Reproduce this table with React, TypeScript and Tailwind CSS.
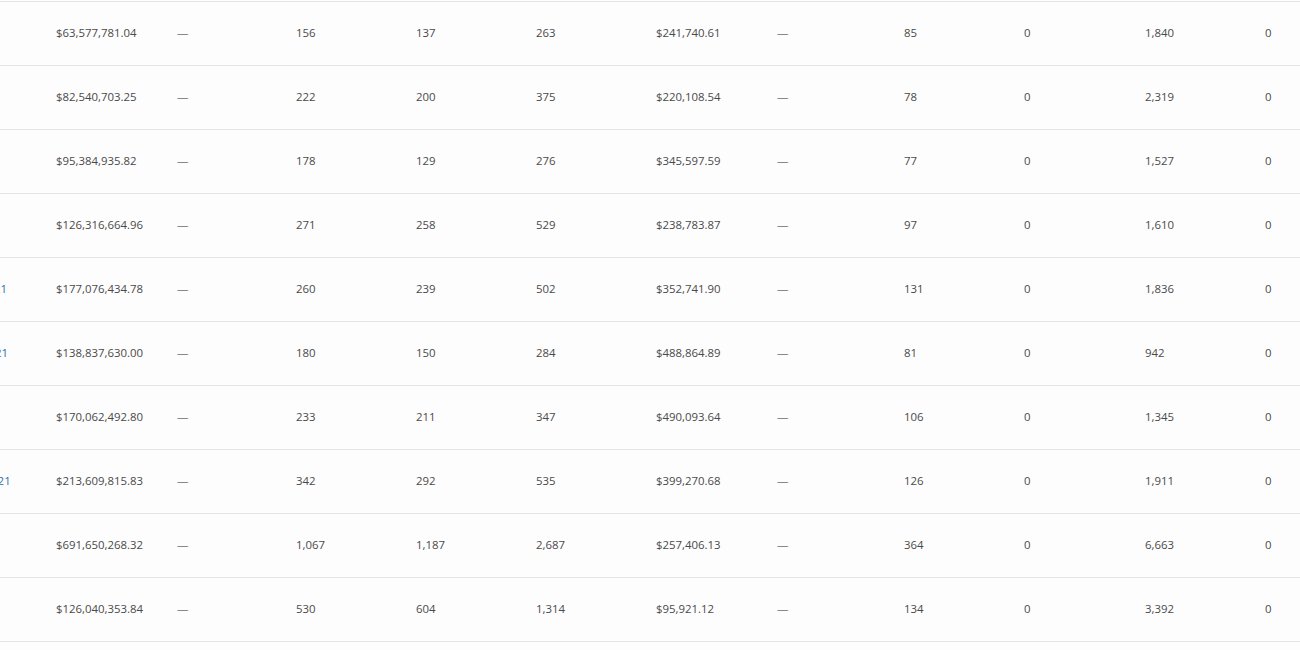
const rows = [
  { period: "August 2021", spend: "$63,577,781.04", a: "156", b: "137", c: "263", avg: "$241,740.61", d: "85", e: "0", f: "1,840", g: "0" },
  { period: "July 2021", spend: "$82,540,703.25", a: "222", b: "200", c: "375", avg: "$220,108.54", d: "78", e: "0", f: "2,319", g: "0" },
  { period: "June 2021", spend: "$95,384,935.82", a: "178", b: "129", c: "276", avg: "$345,597.59", d: "77", e: "0", f: "1,527", g: "0" },
  { period: "October 2021", spend: "$126,316,664.96", a: "271", b: "258", c: "529", avg: "$238,783.87", d: "97", e: "0", f: "1,610", g: "0" },
  { period: "December 2021", spend: "$177,076,434.78", a: "260", b: "239", c: "502", avg: "$352,741.90", d: "131", e: "0", f: "1,836", g: "0" },
  { period: "November 2021", spend: "$138,837,630.00", a: "180", b: "150", c: "284", avg: "$488,864.89", d: "81", e: "0", f: "942", g: "0" },
  { period: "May 2021", spend: "$170,062,492.80", a: "233", b: "211", c: "347", avg: "$490,093.64", d: "106", e: "0", f: "1,345", g: "0" },
  { period: "September 2021", spend: "$213,609,815.83", a: "342", b: "292", c: "535", avg: "$399,270.68", d: "126", e: "0", f: "1,911", g: "0" },
  { period: "2021", spend: "$691,650,268.32", a: "1,067", b: "1,187", c: "2,687", avg: "$257,406.13", d: "364", e: "0", f: "6,663", g: "0" },
  { period: "April 2021", spend: "$126,040,353.84", a: "530", b: "604", c: "1,314", avg: "$95,921.12", d: "134", e: "0", f: "3,392", g: "0" },
];

const Dash = () => <span className="text-[#888]">—</span>;

const App = () => {
  return (
    <div className="w-[1300px] h-[650px] overflow-hidden bg-[#fdfdfd] pt-px font-['Open_Sans',sans-serif] text-[11.4px] text-[#4a4a4a]">
      {/* table is scrolled sideways, first column mostly out of view */}
      <div className="-ml-[77px] w-[1500px] border-t border-[#e6e6e6]">
        {rows.map((r) => (
          <div key={r.spend} className="flex h-[64px] items-center pb-0.5 border-b border-[#e6e6e6] whitespace-nowrap">
            <div className="w-[133px] shrink-0 text-[#2f6fae]">{r.period}</div>
            <div className="w-[121px] shrink-0">{r.spend}</div>
            <div className="w-[119px] shrink-0"><Dash /></div>
            <div className="w-[120px] shrink-0">{r.a}</div>
            <div className="w-[120px] shrink-0">{r.b}</div>
            <div className="w-[120px] shrink-0">{r.c}</div>
            <div className="w-[121px] shrink-0">{r.avg}</div>
            <div className="w-[127px] shrink-0"><Dash /></div>
            <div className="w-[120px] shrink-0">{r.d}</div>
            <div className="w-[121px] shrink-0">{r.e}</div>
            <div className="w-[120px] shrink-0">{r.f}</div>
            <div className="w-[120px] shrink-0">{r.g}</div>
          </div>
        ))}
      </div>
    </div>
  );
};

export default App;
